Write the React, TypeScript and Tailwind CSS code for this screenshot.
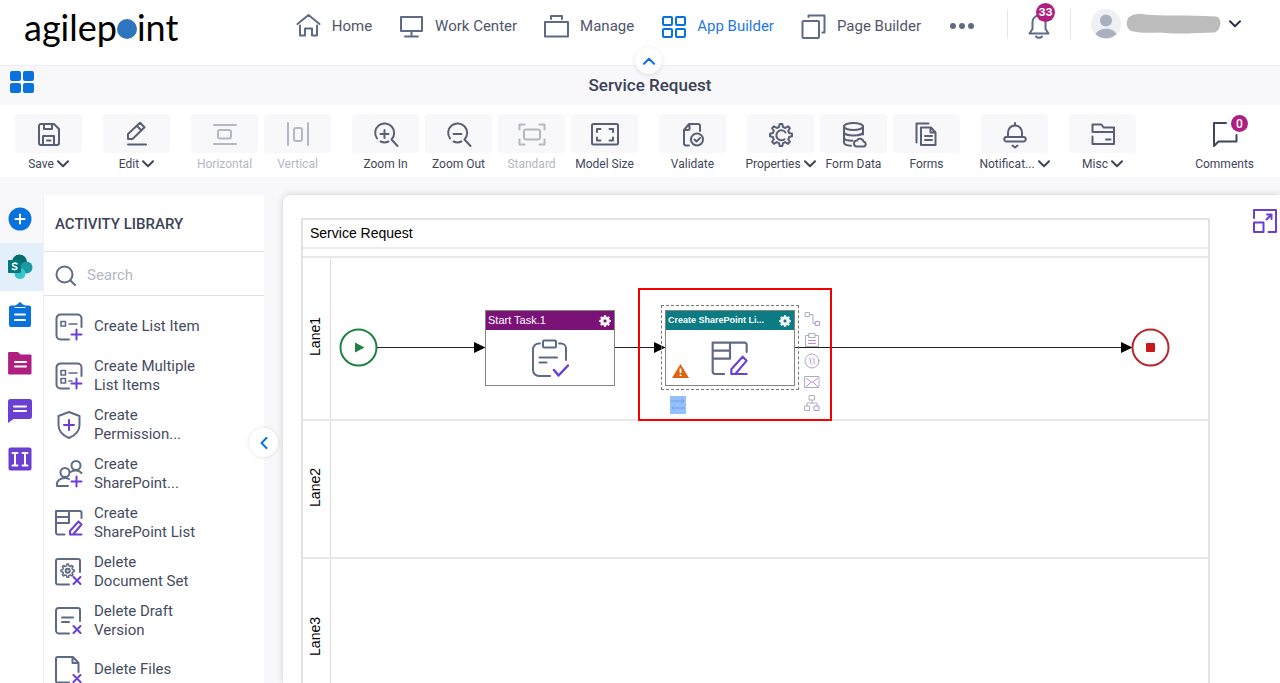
import type { ReactNode } from "react";

interface IconProps {
  w: number;
  h: number;
  sw?: number;
  className?: string;
  children: ReactNode;
}

const PURPLE = "#6b3fd4";

function Icon({ w, h, sw = 2, className = "", children }: IconProps) {
  return (
    <svg
      width={w}
      height={h}
      viewBox={`0 0 ${w} ${h}`}
      fill="none"
      stroke="currentColor"
      strokeWidth={sw}
      strokeLinecap="round"
      strokeLinejoin="round"
      aria-hidden="true"
      className={`shrink-0 ${className}`}
    >
      {children}
    </svg>
  );
}

const Chevron = () => (
  <Icon w={12} h={8}>
    <path d="M1 1.2l5 5 5-5" />
  </Icon>
);

const GEAR_PATH =
  "M10.7 1h2.6l.7 3 2.3 1 2.7-1.7 1.9 1.9L19.2 7.8l1 2.2 2.8.7v2.6l-2.8.7-1 2.3 1.7 2.6-1.9 1.9-2.7-1.7-2.3 1-.7 2.9h-2.6l-.7-2.9-2.3-1L5 20.8l-1.9-1.9 1.7-2.6-1-2.3-2.8-.7v-2.6l2.8-.7 1-2.2L3.1 5.2 5 3.3 7.7 5l2.3-1z";

const SolidGear = () => (
  <svg width={12} height={12} viewBox="0 0 24 24" fill="#fff" fillRule="evenodd" aria-hidden="true">
    <path d={`${GEAR_PATH}M12 8a4 4 0 1 0 0 8 4 4 0 0 0 0-8z`} stroke="#fff" strokeWidth="1.5" />
  </svg>
);

const navItems = [
  {
    label: "Home",
    icon: <path d="M1.5 11L12.5 2l11 9M4 12.5v10h5v-7h7v7h5v-10" />,
  },
  {
    label: "Work Center",
    icon: <path d="M2 4h21v14H2zM12.5 18v5M6 23.5h13" />,
  },
  {
    label: "Manage",
    icon: <path d="M1 9h23v14.5H1zM7 6V3h11v3" />,
  },
  {
    label: "App Builder",
    active: true,
    icon: (
      <>
        <rect x="2" y="4" width="9" height="8" rx="1" />
        <rect x="15" y="4" width="9" height="8" rx="1" />
        <rect x="2" y="16" width="9" height="8" rx="1" />
        <rect x="15" y="16" width="9" height="8" rx="1" />
      </>
    ),
  },
  {
    label: "Page Builder",
    icon: (
      <>
        <rect x="1.5" y="8" width="16.5" height="17" rx="1" />
        <path d="M7.5 4V2.5h16v17h-2" />
      </>
    ),
  },
];

interface Tool {
  label: string;
  menu?: boolean;
  disabled?: boolean;
  icon: ReactNode;
}

const toolGroups: Tool[][] = [
  [
    {
      label: "Save",
      menu: true,
      icon: (
        <path d="M5 3h14l5 5v14a2 2 0 0 1-2 2H6a2 2 0 0 1-2-2V4.500zM9 3v5h8V3M8 24v-9h11v9M12 19.500h3.500" />
      ),
    },
  ],
  [
    {
      label: "Edit",
      menu: true,
      icon: <path d="M5 18v-5L17 1.800l4.500 4.500L9.500 18zM14 5l4.500 4.500M5 23.500h18" />,
    },
  ],
  [
    {
      label: "Horizontal",
      disabled: true,
      icon: (
        <>
          <path d="M3 4h22M3 23h22" />
          <rect x="7" y="9" width="13" height="8.500" rx="2" />
        </>
      ),
    },
    {
      label: "Vertical",
      disabled: true,
      icon: (
        <>
          <path d="M4 2v22M24 2v22" />
          <rect x="10" y="7" width="8" height="13" rx="2" />
        </>
      ),
    },
  ],
  [
    {
      label: "Zoom In",
      icon: (
        <path d="M5 17.500A9.500 9.500 0 1 1 19.500 18.500M16.500 20.500A9.500 9.500 0 0 1 8.500 20.500M19.500 18.500l6 6.500M12.500 9v8M8.500 13h8" />
      ),
    },
    {
      label: "Zoom Out",
      icon: (
        <path d="M5 17.500A9.500 9.500 0 1 1 19.500 18.500M16.500 20.500A9.500 9.500 0 0 1 8.500 20.500M19.500 18.500l6 6.500M8.500 13h8" />
      ),
    },
    {
      label: "Standard",
      disabled: true,
      icon: (
        <>
          <path d="M1.500 8.500v-5h5M21.500 3.500h5v5M26.500 18.500v5h-5M6.500 23.500h-5v-5" />
          <rect x="6" y="8.500" width="16" height="10" rx="2" />
        </>
      ),
    },
    {
      label: "Model Size",
      icon: (
        <>
          <rect x="1" y="3" width="26" height="20.500" rx="1.500" />
          <path d="M6 11V8h3.500M18.500 8H22v3M22 16.500v3h-3.500M9.500 19.500H6v-3" />
        </>
      ),
    },
  ],
  [
    {
      label: "Validate",
      icon: (
        <>
          <path d="M10 24.500H7a2 2 0 0 1-2-2V9l5-6h9a2 2 0 0 1 2 2v5M5 9h4a1.500 1.500 0 0 0 1.500-1.500V3" />
          <circle cx="18" cy="18.500" r="6" />
          <path d="M15.500 18.500l2 2 3.500-3.500" />
        </>
      ),
    },
  ],
  [
    {
      label: "Properties",
      menu: true,
      icon: (
        <>
          <path d={GEAR_PATH} transform="translate(2 2)" />
          <path d="M18.500 11.500A5 5 0 1 0 17.500 18.200" />
        </>
      ),
    },
    {
      label: "Form Data",
      icon: (
        <>
          <ellipse cx="13.500" cy="5.500" rx="9.500" ry="3.500" />
          <path d="M4 5.500v16c0 1.800 3 3 7 3.200M23 5.500v8M4 11c0 2 4 3.500 9.500 3.500S23 13 23 11M4 16.500c0 2 3.500 3.200 8.500 3.300" />
          <path d="M17 25.500a3 3 0 0 1 0-6 3.500 3.500 0 0 1 6.500 1 2.600 2.600 0 0 1 .5 5z" />
        </>
      ),
    },
    {
      label: "Forms",
      icon: <path d="M3.500 21.500V2.500h12M8 6.500h10l4.500 5V24H8zM17.500 6.500v5h5M12 15h7M12 19h7" />,
    },
  ],
  [
    {
      label: "Notificat...",
      menu: true,
      icon: (
        <path d="M14 2v2.500M7 16V11.500a7 7 0 0 1 14 0V16M5.500 16h17a2 2 0 0 1 0 4.500h-17a2 2 0 0 1 0-4.500zM11.500 24.500l2.500 2 2.500-2" />
      ),
    },
  ],
  [
    {
      label: "Misc",
      menu: true,
      icon: <path d="M3.500 11V3.500h9l2 3H25V11zM3.500 15.500V23H25V11M17 18.500h4.500" />,
    },
  ],
];

const plus = <path d="M21.500 16.500v10M16.500 21.500h10" stroke={PURPLE} />;
const cross = <path d="M18.500 19l7 7M25.500 19l-7 7" stroke={PURPLE} />;
const listGrid = (
  <>
    <path d="M14 26.500H5.500a4 4 0 0 1-4-4v-17a4 4 0 0 1 4-4h17a4 4 0 0 1 4 4V14" />
    <path d="M6 8.500h4.500v4.500H6zM14 11h8" strokeWidth="1.600" />
  </>
);
const tableEdit = (
  <>
    <path d="M9.500 25.500H3a2 2 0 0 1-2-2V2h24a1.500 1.500 0 0 1 1.500 1.500V9M1 8h13M1 14h13V2" />
    <path d="M15 25.500v-3.500L23.500 12.500l3 3L18 25.500zM15 25.500h11.500" stroke={PURPLE} />
  </>
);

const activities = [
  { name: "Create List Item", icon: <>{listGrid}{plus}</> },
  {
    name: "Create Multiple List Items",
    icon: (
      <>
        {listGrid}
        <path d="M6 16.500h4.500V21H6zM14 19h3" strokeWidth="1.600" />
        {plus}
      </>
    ),
  },
  {
    name: "Create Permission...",
    icon: (
      <>
        <path d="M14 1l10.500 4v9c0 6-4.500 10.500-10.500 13C8 24.500 3.500 20 3.500 14V5z" />
        <path d="M14 9v10M9 14h10" stroke={PURPLE} />
      </>
    ),
  },
  {
    name: "Create SharePoint...",
    icon: (
      <>
        <circle cx="21" cy="5.500" r="4.500" />
        <circle cx="10" cy="12.500" r="4.500" />
        <path d="M13 26H2c-1-5 3-8 8-8 1.500 0 3 .4 4 1M15.500 12c3-2 8-2.500 11 1" />
        {plus}
      </>
    ),
  },
  { name: "Create SharePoint List", icon: tableEdit },
  {
    name: "Delete Document Set",
    icon: (
      <>
        <path d="M14 26.500H3a2 2 0 0 1-2-2V3a2 2 0 0 1 2-2h20a2 2 0 0 1 2 2v11" />
        <path d={GEAR_PATH} transform="translate(5.500 5.500) scale(.6)" strokeWidth="2.500" />
        <circle cx="12.700" cy="12.700" r="2" />
        {cross}
      </>
    ),
  },
  {
    name: "Delete Draft Version",
    icon: (
      <>
        <path d="M14 26.500H4a3 3 0 0 1-3-3v-20a2.500 2.500 0 0 1 2.500-2.500H23a2 2 0 0 1 2 2v11M7 10.500h11M7 15h7" />
        {cross}
      </>
    ),
  },
  {
    name: "Delete Files",
    icon: (
      <>
        <path d="M14 26.500H2.500A1.500 1.500 0 0 1 1 25V2.500A1.500 1.500 0 0 1 2.500 1H18l5.500 6v9M17.500 1.500V7h5.500" />
        {cross}
      </>
    ),
  },
];

const railItems = [
  {
    name: "Add",
    tile: "bg-[#f8f8fb]",
    icon: (
      <>
        <circle cx="13" cy="13" r="11.500" fill="#0a72dc" />
        <path d="M13 8.500v9M8.500 13h9" stroke="#fff" strokeWidth="2" />
      </>
    ),
  },
  {
    name: "SharePoint",
    tile: "bg-[#e3effa]",
    icon: (
      <>
        <circle cx="12.500" cy="8" r="7.500" fill="#036c70" />
        <circle cx="19.500" cy="13.500" r="6" fill="#1a9ba1" />
        <circle cx="13" cy="19.500" r="5.500" fill="#37c6d0" />
        <rect x="1" y="6" width="13" height="13" rx="1" fill="#03787c" />
        <path d="M10 9.800C8.500 8.700 5.500 9 5.500 10.800c0 2 4.500 1.300 4.500 3.300 0 1.800-3 1.800-4.700.8" stroke="#fff" strokeWidth="1.600" />
      </>
    ),
  },
  {
    name: "Tasks",
    tile: "bg-white",
    icon: (
      <>
        <path d="M4 3.500h4l2-1 3-2.500 3 2.500 2 1h4a2 2 0 0 1 2 2V23a2 2 0 0 1-2 2H4a2 2 0 0 1-2-2V5.500a2 2 0 0 1 2-2z" fill="#0a72dc" />
        <path d="M8 12.500h10M8 18h10" stroke="#fff" strokeWidth="2" />
        <path d="M8 5.500h10" stroke="#fff" strokeWidth="1" />
      </>
    ),
  },
  {
    name: "Forms",
    tile: "bg-white",
    icon: (
      <>
        <path d="M2 2.500h9l2.500 2.500H24v19H2z" fill="#af1f80" stroke="#af1f80" />
        <path d="M8 12h11M8 16.500h11" stroke="#fff" strokeWidth="2" />
      </>
    ),
  },
  {
    name: "Messages",
    tile: "bg-white",
    icon: (
      <>
        <path d="M3.500 1h19a2.500 2.500 0 0 1 2.500 2.500v15a2.500 2.500 0 0 1-2.500 2.500H6.500L1 25V3.500A2.500 2.500 0 0 1 3.500 1z" fill={PURPLE} />
        <path d="M7 8.500h12M7 13h12" stroke="#fff" strokeWidth="2" />
      </>
    ),
  },
  {
    name: "Columns",
    tile: "bg-white",
    icon: (
      <>
        <rect x="1.500" y="1.500" width="23" height="23" rx="2" fill={PURPLE} />
        <path d="M5.500 7h5M5.500 19.500h5M8 7v12.500M15.500 7h5M15.500 19.500h5M18 7v12.500" stroke="#fff" strokeWidth="2" />
      </>
    ),
  },
];

function Header() {
  return (
    <header className="relative flex h-[66px] items-start border-b border-[#eeeff3] bg-white">
      <a href="#" aria-label="agilepoint" className="ml-6 mt-1 flex w-[154px] items-center font-['Lato'] text-[36px] leading-[46px] text-black">
        <span>agilep</span>
        <span className="mt-1 size-5 shrink-0 rounded-full bg-[#2f75bd]" />
        <span>int</span>
      </a>
      <nav className="ml-auto flex h-[52px] items-center gap-[27px] text-[15px] text-[#4f566b]">
        {navItems.map((item) => (
          <a key={item.label} href="#" className={`flex items-center gap-[10px] whitespace-nowrap ${item.active ? "text-[#1f78e4]" : ""}`}>
            <Icon w={26} h={26} className={item.active ? "text-[#0a72dc]" : "text-[#5f6b85]"}>
              {item.icon}
            </Icon>
            {item.label}
          </a>
        ))}
        <button type="button" aria-label="More" className="ml-[2px] flex gap-[3px]">
          <span className="size-[6px] rounded-full bg-[#5f6b85]" />
          <span className="size-[6px] rounded-full bg-[#5f6b85]" />
          <span className="size-[6px] rounded-full bg-[#5f6b85]" />
        </button>
      </nav>
      <div className="ml-[33px] mr-[39px] flex h-12 items-center">
        <div className="flex h-[30px] items-center border-x border-[#e3e5ec] px-5">
          <button type="button" aria-label="Notifications" className="relative text-[#5f6b85]">
            <Icon w={22} h={26} className="mt-1">
              <path d="M1.500 20.500h19L17.500 16V9a6.500 6.500 0 0 0-13 0v7zM8 23.500a3.500 2.500 0 0 0 6 0" />
            </Icon>
            <span className="absolute -top-[6px] left-2 flex size-[19px] items-center justify-center rounded-full bg-[#af1f80] font-['Inter'] text-[11px] font-bold leading-none text-white">
              33
            </span>
          </button>
        </div>
        <button type="button" aria-label="Account" className="ml-5 flex items-center text-[#2d3448]">
          <svg width="30" height="30" viewBox="0 0 30 30" aria-hidden="true">
            <circle cx="15" cy="15" r="15" fill="#eff0f3" />
            <circle cx="15" cy="11.500" r="6" fill="#aab0be" />
            <path d="M4.500 25c4-7 17-7 21 0a15 15 0 0 1-21 0z" fill="#aab0be" />
          </svg>
          <svg width="95" height="22" viewBox="0 0 95 22" className="ml-[5px] mr-2" aria-hidden="true">
            <path d="M3 4C8 1 15 0 19 1.500 35 3 60 2 90 3.500c4 1 4 4 4.500 6-.5 4-1 8-6 10C70 20 50 21.500 35 19.500 25 20 12 20 5 18 0 15-.5 8 3 4z" fill="#bcbcbc" />
          </svg>
          <Chevron />
        </button>
      </div>
      <button
        type="button"
        aria-label="Collapse header"
        className="absolute left-1/2 top-[47px] z-10 ml-[-5px] flex size-[27px] items-center justify-center rounded-full bg-white text-[#0a72dc] shadow-[0_1px_4px_rgba(0,0,0,0.12)]"
      >
        <span className="rotate-180">
          <Chevron />
        </span>
      </button>
    </header>
  );
}

function Toolbar() {
  return (
    <div className="flex items-start gap-[21px] bg-white pb-[5px] pl-[15px] pr-[26px] pt-[9px] text-xs text-[#3f4659]">
      {toolGroups.map((group) => (
        <div key={group[0].label} className="flex gap-[6px]">
          {group.map((tool) => (
            <button
              key={tool.label}
              type="button"
              disabled={tool.disabled}
              className={`flex w-[67px] flex-col items-center ${tool.disabled ? "text-[#b4b8c2]" : ""}`}
            >
              <span className={`flex h-[39px] w-full items-center justify-center rounded-sm bg-[#f8f8fb] pt-[2px] ${tool.disabled ? "" : "text-[#596076]"}`}>
                <Icon w={28} h={28}>
                  {tool.icon}
                </Icon>
              </span>
              <span className="mt-[3px] flex h-4 items-center gap-[3px] whitespace-nowrap">
                {tool.label}
                {tool.menu && <Chevron />}
              </span>
            </button>
          ))}
        </div>
      ))}
      <button type="button" className="relative ml-auto flex flex-col items-center">
        <span className="flex h-[39px] items-center">
          <Icon w={28} h={28}>
            <path d="M15 3H3v23l4.500-4.500h18V15" />
          </Icon>
        </span>
        <span className="mt-[3px] leading-4">Comments</span>
        <span className="absolute right-[6px] top-[1px] flex size-[17px] items-center justify-center rounded-full bg-[#af1f80] font-medium leading-none text-white">
          0
        </span>
      </button>
    </div>
  );
}

function Sidebar() {
  return (
    <>
      <nav aria-label="Libraries" className="mt-[18px] flex w-[43px] shrink-0 flex-col bg-white">
        {railItems.map((item) => (
          <button key={item.name} type="button" aria-label={item.name} className={`flex h-12 items-center pl-[7px] ${item.tile}`}>
            <svg width="26" height="26" viewBox="0 0 26 26" fill="none" strokeLinecap="round" aria-hidden="true">
              {item.icon}
            </svg>
          </button>
        ))}
      </nav>
      <aside className="relative mt-[18px] w-[221px] shrink-0 border-l border-[#f1f1f4] bg-white">
        <h2 className="border-b border-[#dfe1e8] pl-[11px] pt-[2px] text-[15px] font-medium leading-[54px] text-[#3b4256]">ACTIVITY LIBRARY</h2>
        <div className="flex h-11 items-center gap-[10px] border-b border-[#dfe1e8] pl-[11px] pt-1 text-[#5f6b85]">
          <label htmlFor="activity-search">
            <Icon w={22} h={22}>
              <circle cx="9.500" cy="9.500" r="8" />
              <path d="M15.500 15.500l4.500 4.500" />
            </Icon>
          </label>
          <input
            id="activity-search"
            type="text"
            aria-label="Search activities"
            placeholder="Search"
            className="min-w-0 flex-1 text-[15px] outline-none placeholder:text-[#b4b8c2]"
          />
        </div>
        <ul className="pt-[6px]">
          {activities.map((activity) => (
            <li key={activity.name} className="flex h-[49px] items-center gap-[11px] pl-[11px] text-[#5f6b85]">
              <Icon w={28} h={28}>
                {activity.icon}
              </Icon>
              <span className="w-[110px] text-[15px] leading-[19px] text-[#454c5f]">{activity.name}</span>
            </li>
          ))}
        </ul>
        <button
          type="button"
          aria-label="Collapse library"
          className="absolute -right-[14px] top-[233px] z-10 flex size-[29px] items-center justify-center rounded-full bg-white text-[#0a72dc] shadow-[0_0_4px_rgba(0,0,0,0.12)]"
        >
          <Icon w={8} h={12}>
            <path d="M6.500 1l-5 5 5 5" />
          </Icon>
        </button>
      </aside>
    </>
  );
}

const lanes = [
  { name: "Lane1", height: "h-[163px]" },
  { name: "Lane2", height: "h-[138px]" },
  { name: "Lane3", height: "h-[160px]" },
];

const sideIcons = [
  {
    name: "Link",
    icon: (
      <>
        <path d="M1.500 1.500h4v4h-4zM6 3.500h3v9h2" />
        <path d="M11.500 10.500h4v4h-4z" stroke="#b48fe8" />
      </>
    ),
  },
  {
    name: "Task",
    icon: (
      <>
        <path d="M5 3.500H1.500v11h13v-11H11M5 1.500h6v4H5z" />
        <path d="M4.500 8.500h7M4.500 11.500h7" stroke="#b48fe8" />
      </>
    ),
  },
  {
    name: "Event",
    icon: (
      <>
        <circle cx="8" cy="8" r="7" />
        <path d="M5.500 5.500c3 0-1 5 2 5M9 5.500c3 0-1 5 2 5" stroke="#b48fe8" />
      </>
    ),
  },
  {
    name: "Email",
    icon: (
      <>
        <path d="M1 2.500h14v11H1z" />
        <path d="M2.500 4.500L8 8.500l5.500-4M2.500 12.500l4-4M13.500 12.500l-4-4" stroke="#b48fe8" />
      </>
    ),
  },
  {
    name: "Subprocess",
    icon: (
      <>
        <path d="M5.500 .5h5V5h-5zM1 11h4.500v4.500H1zM8 5.500V8M3 11V8h10v3" />
        <path d="M10.500 11H15v4.500h-4.500z" stroke="#b48fe8" />
      </>
    ),
  },
];

function Workflow() {
  return (
    <main className="relative mt-[18px] ml-[19px] min-w-0 flex-1 overflow-hidden rounded-tl-lg bg-white pl-[18px] pr-[70px] pt-[23px] font-['Liberation_Sans',sans-serif] shadow-[0_0_6px_rgba(0,0,0,0.18)]">
      <div className="relative border-2 border-[#e2e2e2] text-sm text-black">
        <h2 className="border-b-2 border-[#ececec] pl-[7px] leading-[27px]">Service Request</h2>
        <div className="h-[9px] border-b-2 border-[#e8e8e8]" />
        {lanes.map((lane) => (
          <section key={lane.name} className={`flex border-b-2 border-[#e8e8e8] ${lane.height}`}>
            <div className="flex w-[28px] items-center justify-center border-r border-[#dcdcdc] pb-1 pr-1">
              <h3 className="rotate-180 [writing-mode:vertical-rl]">{lane.name}</h3>
            </div>
          </section>
        ))}

        {/* connectors */}
        <svg className="pointer-events-none absolute left-0 top-0" width="840" height="140" aria-hidden="true">
          <path d="M74 127.500h98M311 127.500h41M492 127.500h327" stroke="#222" strokeWidth="1.200" />
          <path d="M171 122l11.500 5.500-11.500 5.500zM351 122l11.500 5.500-11.500 5.500zM818 122l11.500 5.500-11.500 5.500z" />
        </svg>

        <button type="button" aria-label="Start" className="absolute left-[36px] top-[108px]">
          <svg width="39" height="39" viewBox="0 0 39 39" aria-hidden="true">
            <circle cx="19.500" cy="19.500" r="18" fill="#fff" stroke="#1d8340" strokeWidth="2" />
            <path d="M16 14.500l9.500 5-9.500 5z" fill="#1d8340" />
          </svg>
        </button>

        <div className="absolute left-[182px] top-[90px] w-[130px] border border-[#85857d] bg-white">
          <div className="flex h-[19px] items-center justify-between bg-[#7b1278] pl-[2px] pr-[3px] text-[11px] text-white">
            <span>Start Task.1</span>
            <button type="button" aria-label="Configure Start Task.1">
              <SolidGear />
            </button>
          </div>
          <div className="flex h-[55px] items-center justify-center">
            <Icon w={38} h={38} className="text-[#5f6b85]">
              <path d="M9 4.500H8A6 6 0 0 0 2 10.500V31a6 6 0 0 0 6 6h11M28 4.500h2a5 5 0 0 1 5 5V21M8.500 18.500h17.500M8.500 23.500h7" />
              <rect x="12" y="1.500" width="13" height="7" rx="1" />
              <path d="M23 31l4.500 5.500L37 26.500" stroke={PURPLE} strokeWidth="2.500" />
            </Icon>
          </div>
        </div>

        <div className="absolute left-[358px] top-[85px] h-[85px] w-[138px] border border-dashed border-[#777]" />
        <div className="absolute left-[362px] top-[90px] w-[130px] border border-[#85857d] bg-white">
          <div className="flex h-[19px] items-center justify-between bg-[#0b7c83] pl-[2px] pr-[3px] text-[9px] font-bold text-white">
            <span>Create SharePoint Li...</span>
            <button type="button" aria-label="Configure Create SharePoint List">
              <SolidGear />
            </button>
          </div>
          <div className="relative flex h-[55px] items-center justify-center">
            <svg width="38" height="36" viewBox="0 0 28 27" fill="none" stroke="#5f6b85" strokeWidth="1.600" strokeLinecap="round" strokeLinejoin="round" aria-hidden="true">
              {tableEdit}
            </svg>
            <svg width="17" height="14" viewBox="0 0 17 14" className="absolute bottom-[7px] left-[6px]" aria-hidden="true">
              <path d="M8.500 0L17 14H0z" fill="#dd6410" />
              <path d="M8.500 4.500V9M8.500 10.500V12" stroke="#fff" strokeWidth="1.800" />
            </svg>
          </div>
        </div>

        <svg className="absolute left-[367px] top-[176px]" width="16" height="18" viewBox="0 0 16 18" aria-hidden="true">
          <rect width="16" height="18" fill="#94c1fd" />
          <path d="M1 5h13M11.500 2.500L14 5l-2.500 2.500M15 12H2M4.500 9.500L2 12l2.500 2.500" fill="none" stroke="#6f9fe6" />
        </svg>

        <div className="absolute left-[501px] top-[91px] flex flex-col gap-[5px] text-[#a9afc0]">
          {sideIcons.map((item) => (
            <button key={item.name} type="button" aria-label={item.name}>
              <Icon w={16} h={16} sw={1}>
                {item.icon}
              </Icon>
            </button>
          ))}
        </div>

        <div className="pointer-events-none absolute left-[335px] top-[68px] h-[133px] w-[194px] border-2 border-[#f40000]" />

        <button type="button" aria-label="Stop" className="absolute left-[828px] top-[108px]">
          <svg width="39" height="39" viewBox="0 0 39 39" aria-hidden="true">
            <circle cx="19.500" cy="19.500" r="18" fill="#fff" stroke="#b9262b" strokeWidth="2" />
            <rect x="15" y="15" width="9" height="9" rx="1" fill="#c91818" />
          </svg>
        </button>
      </div>

      <button type="button" aria-label="Expand canvas" className="absolute right-[3px] top-[14px] text-[#6b3fd4]">
        <Icon w={24} h={24}>
          <path d="M1 9V1h22v22h-7.500M1 13.500h9.500V23H1zM13.500 10.500l5-5M14 5.500h4.500V10" />
        </Icon>
      </button>
    </main>
  );
}

export default function App() {
  return (
    <div className="flex h-screen min-w-[1180px] flex-col overflow-hidden bg-[#f8f8fb] font-['Roboto',sans-serif]">
      <Header />
      <div className="relative flex h-[39px] items-center">
        <button type="button" aria-label="Apps" className="absolute left-[10px] top-[5px] grid grid-cols-2 gap-[2px]">
          <span className="h-[10px] w-[11px] rounded-[2px] bg-[#0a72dc]" />
          <span className="h-[10px] w-[11px] rounded-[2px] bg-[#0a72dc]" />
          <span className="h-[10px] w-[11px] rounded-[2px] bg-[#0a72dc]" />
          <span className="h-[10px] w-[11px] rounded-[2px] bg-[#0a72dc]" />
        </button>
        <h1 className="w-full pl-5 text-center text-[17px] font-medium text-[#3b4256]">Service Request</h1>
      </div>
      <Toolbar />
      <div className="flex min-h-0 flex-1">
        <Sidebar />
        <Workflow />
      </div>
    </div>
  );
}
